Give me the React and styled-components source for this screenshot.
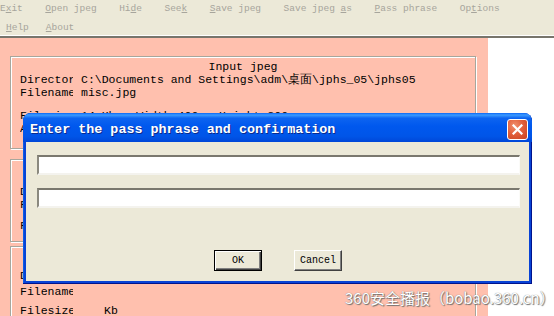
import styled, {createGlobalStyle} from 'styled-components';

const GlobalStyle = createGlobalStyle`
  html, body, #root {
    margin: 0;
    height: 100%;
    overflow: hidden;
    background: #fff;
  }
`;

const menuRows = [
  [['E', 'x', 'it'], ['', 'O', 'pen jpeg'], ['Hi', 'd', 'e'], ['See', 'k', ''], ['', 'S', 'ave jpeg'], ['Save jpeg ', 'a', 's'], ['', 'P', 'ass phrase'], ['Op', 't', 'ions']],
  [['', 'H', 'elp'], ['', 'A', 'bout']],
];

export default function App() {
  return (
    <Page>
      <GlobalStyle />
      <MenuBar>
        {menuRows.map((row, i) => (
          <MenuRow key={i} $second={i === 1}>
            {row.map(([a, k, b]) => (
              <MenuItem key={a + k + b}>
                {a}<u>{k}</u>{b}
              </MenuItem>
            ))}
          </MenuRow>
        ))}
      </MenuBar>
      <Main>
        <Panel>
          <Group $height={93} $pad={3}>
            <Title>Input jpeg</Title>
            <Row>
              <Label>Directory</Label>
              <Value>C:\Documents and Settings\adm\桌面\jphs_05\jphs05</Value>
            </Row>
            <Row>
              <Label>Filename</Label>
              <Value>misc.jpg</Value>
            </Row>
            <Row $top={10}>
              <Label>Filesize</Label>
              <Value>14 Kb   Width 400   Height 300</Value>
            </Row>
            <Row>
              <Label>Approx max</Label>
              <Value>capacity 3 Kb  Recommended limit 1 Kb</Value>
            </Row>
          </Group>
          <Group $height={83} $pad={9} $top={10}>
            <Title>Hidden file</Title>
            <Row $top={3}>
              <Label>Directory</Label>
              <Value></Value>
            </Row>
            <Row>
              <Label>Filename</Label>
              <Value></Value>
            </Row>
            <Row $top={8}>
              <Label>Filesize</Label>
              <Value>Kb</Value>
            </Row>
          </Group>
          <Group $height={90} $pad={8} $top={4}>
            <Title>Saved jpeg file</Title>
            <Row $top={1}>
              <Label>Directory</Label>
              <Value></Value>
            </Row>
            <Row $top={3}>
              <Label>Filename</Label>
              <Value></Value>
            </Row>
            <Row $top={6}>
              <Label>Filesize</Label>
              <Value $indent={23}>Kb</Value>
            </Row>
          </Group>
        </Panel>
      </Main>

      <Dialog>
        <TitleBar>
          <TitleText>Enter the pass phrase and confirmation</TitleText>
          <CloseButton>
            <svg width="11" height="11" viewBox="0 0 11 11">
              <path d="M1.5 1.5 L9.5 9.5 M9.5 1.5 L1.5 9.5" stroke="#fff" strokeWidth="2.2" strokeLinecap="square" />
            </svg>
          </CloseButton>
        </TitleBar>
        <DialogBody>
          <Field type="password" />
          <Field type="password" $top={13} />
          <ButtonRow>
            <Button $default>OK</Button>
            <Button>Cancel</Button>
          </ButtonRow>
        </DialogBody>
      </Dialog>

      <Watermark>360安全播报（bobao.360.cn）</Watermark>
    </Page>
  );
}

const Page = styled.div`
  position: relative;
  width: 554px;
  height: 316px;
  overflow: hidden;
  display: flex;
  flex-direction: column;
`;

const MenuBar = styled.div`
  height: 36px;
  background: #ece9d8;
  box-shadow: inset 0 -1px #fff;
  border-bottom: 2px solid #77756c;
  font-family: "Liberation Mono", monospace;
  font-size: 9.5px;
  color: #a7a59c;
`;

const MenuRow = styled.div`
  display: flex;
  gap: ${p => (p.$second ? '17px' : '22.5px')};
  padding-left: ${p => (p.$second ? '6px' : '0')};
  line-height: 19px;
  margin-top: ${p => (p.$second ? '0' : '-1.5px')};
`;

const MenuItem = styled.span`
  white-space: pre;
  u {
    text-decoration-thickness: 1px;
    text-underline-offset: 1px;
  }
`;

const Main = styled.div`
  flex: 1;
  display: flex;
  background: #fff;
`;

const Panel = styled.div`
  width: 488px;
  background: #ffc0ae;
  padding: 18px 12px 0 10px;
  box-sizing: border-box;
  display: flex;
  flex-direction: column;
  font-family: "Liberation Mono", monospace;
  font-size: 11.5px;
  color: #000;
`;

const Group = styled.div`
  flex: none;
  height: ${p => p.$height}px;
  margin-top: ${p => p.$top || 0}px;
  box-sizing: border-box;
  border: 1px solid #a8a69c;
  box-shadow: inset 1px 1px #fff, 1px 1px #fff;
  padding: ${p => p.$pad}px 0 0 9px;
`;

const Title = styled.div`
  text-align: center;
  line-height: 13px;
  padding-right: 9px;
`;

const Row = styled.div`
  display: flex;
  line-height: 13px;
  margin-top: ${p => p.$top || 0}px;
  white-space: pre;
`;

const Label = styled.span`
  width: 53px;
  overflow: hidden;
  flex: none;
`;

const Value = styled.span`
  margin-left: ${p => 8 + (p.$indent || 0)}px;
`;

const Dialog = styled.div`
  position: absolute;
  left: 23px;
  top: 113px;
  width: 509px;
  height: 171px;
  box-sizing: border-box;
  background: #0843d6;
  border-radius: 8px 8px 0 0;
  padding: 0 3px 3px;
  display: flex;
  flex-direction: column;
  box-shadow: inset -1px -1px #00138c, inset 1px 0 #0a5de8;
`;

const TitleBar = styled.div`
  height: 29px;
  margin: 0 -3px;
  padding: 0 4px 0 7px;
  border-radius: 8px 8px 0 0;
  background: linear-gradient(
    to bottom,
    #0a66f5 0%,
    #3c9bff 7%,
    #0d64f0 18%,
    #0058ee 45%,
    #0055e8 80%,
    #0047d8 100%
  );
  display: flex;
  align-items: center;
  justify-content: space-between;
`;

const TitleText = styled.span`
  font-family: "Liberation Mono", monospace;
  font-weight: bold;
  font-size: 13.4px;
  color: #fff;
  text-shadow: 1px 1px #0b2a8c;
  white-space: pre;
  margin-top: 3px;
`;

const CloseButton = styled.div`
  width: 19px;
  height: 19px;
  margin-top: 3px;
  border: 1px solid #fff;
  border-radius: 3px;
  background: radial-gradient(circle at 35% 30%, #f0906e 0%, #e2603c 45%, #c8421f 100%);
  display: flex;
  align-items: center;
  justify-content: center;
`;

const DialogBody = styled.div`
  flex: 1;
  background: #ece9d8;
  padding: 13px 9px 0 11px;
  display: flex;
  flex-direction: column;
`;

const Field = styled.input`
  height: 20px;
  margin: ${p => p.$top || 0}px 0 0;
  padding: 0;
  box-sizing: border-box;
  background: #fff;
  border-style: solid;
  border-width: 2px 1px 2px 2px;
  border-color: #7a786e #fbfbf8 #f4f3ee #8b897f;
  outline: none;
`;

const ButtonRow = styled.div`
  display: flex;
  justify-content: center;
  gap: 32px;
  margin-top: 42px;
  padding-right: 1px;
`;

const Button = styled.div`
  width: 48px;
  height: 21px;
  box-sizing: border-box;
  background: #ece9d8;
  font-family: "Liberation Mono", monospace;
  font-size: 10px;
  color: #000;
  display: flex;
  align-items: center;
  justify-content: center;
  border: 1px solid ${p => (p.$default ? '#000' : '#fff')};
  border-right-color: ${p => (p.$default ? '#000' : '#404040')};
  border-bottom-color: ${p => (p.$default ? '#000' : '#404040')};
  box-shadow: ${p =>
    p.$default
      ? 'inset 1px 1px #fff, inset -1px -1px #404040, inset -2px -2px #808080'
      : 'inset -1px -1px #808080'};
`;

const Watermark = styled.div`
  position: absolute;
  left: 345px;
  top: 287px;
  font-family: "Noto Sans CJK SC", "Noto Sans", sans-serif;
  font-size: 15px;
  color: #fff;
  white-space: nowrap;
  text-shadow: 0 0 1px #6b6b6b, 1px 1px 1px #707070;
`;
